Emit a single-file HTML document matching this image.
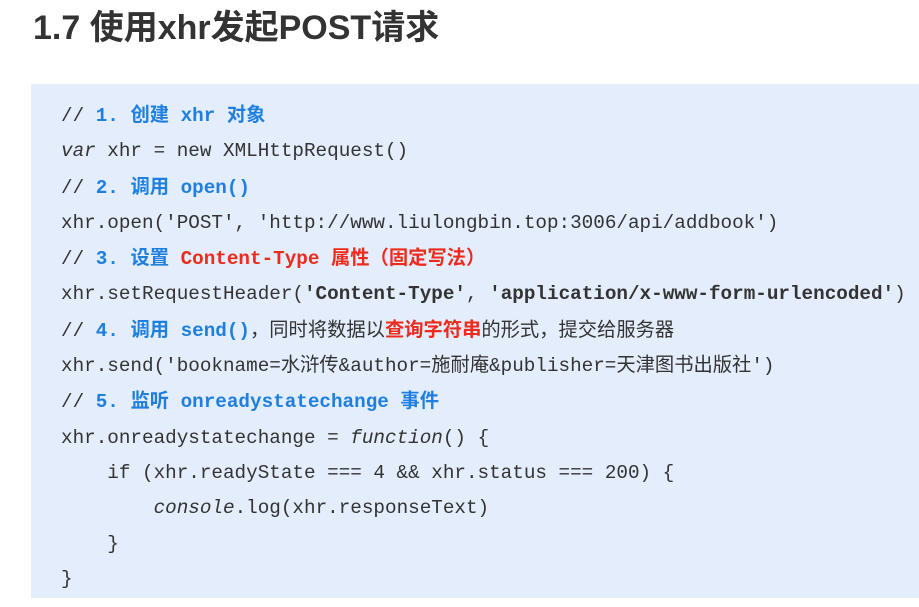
<!DOCTYPE html>
<html><head><meta charset="utf-8"><style>
html,body{margin:0;padding:0;background:#fff;width:919px;height:607px;overflow:hidden}
h1{position:absolute;left:33px;top:4px;margin:0;font:bold 34px/48px "Liberation Sans","Noto Sans CJK SC",sans-serif;color:#333}
.box{position:absolute;left:31px;top:84px;width:900px;height:514px;background:#e3edfb}
.code{position:absolute;left:61px;top:98px;font-family:"Liberation Mono","Noto Sans CJK SC",monospace;font-size:19.3px;line-height:35.3px;color:#333;white-space:pre}
.c{color:#1f7fe0;font-weight:bold}
.r{color:#ee2a1c;font-weight:bold}
.cj{font-family:"Liberation Sans","Noto Sans CJK SC",sans-serif}
b{font-weight:bold}
i{font-style:italic}
</style></head><body>
<h1>1.7 使用xhr发起POST请求</h1>
<div class="box"></div>
<div class="code">// <span class="c">1. <span class="cj">创建</span> xhr <span class="cj">对象</span></span>
<i>var</i> xhr = new XMLHttpRequest()
// <span class="c">2. <span class="cj">调用</span> open()</span>
xhr.open('POST', 'http://www.liulongbin.top:3006/api/addbook')
// <span class="c">3. <span class="cj">设置</span> </span><span class="r">Content-Type <span class="cj">属性（固定写法）</span></span>
xhr.setRequestHeader(<b>'Content-Type'</b>, <b>'application/x-www-form-urlencoded'</b>)
// <span class="c">4. <span class="cj">调用</span> send()</span><span class="cj">，同时将数据以<span class="r">查询字符串</span>的形式，提交给服务器</span>
xhr.send('bookname=水浒传&amp;author=施耐庵&amp;publisher=天津图书出版社')
// <span class="c">5. <span class="cj">监听</span> onreadystatechange <span class="cj">事件</span></span>
xhr.onreadystatechange = <i>function</i>() {
    if (xhr.readyState === 4 &amp;&amp; xhr.status === 200) {
        <i>console</i>.log(xhr.responseText)
    }
}</div>
</body></html>
